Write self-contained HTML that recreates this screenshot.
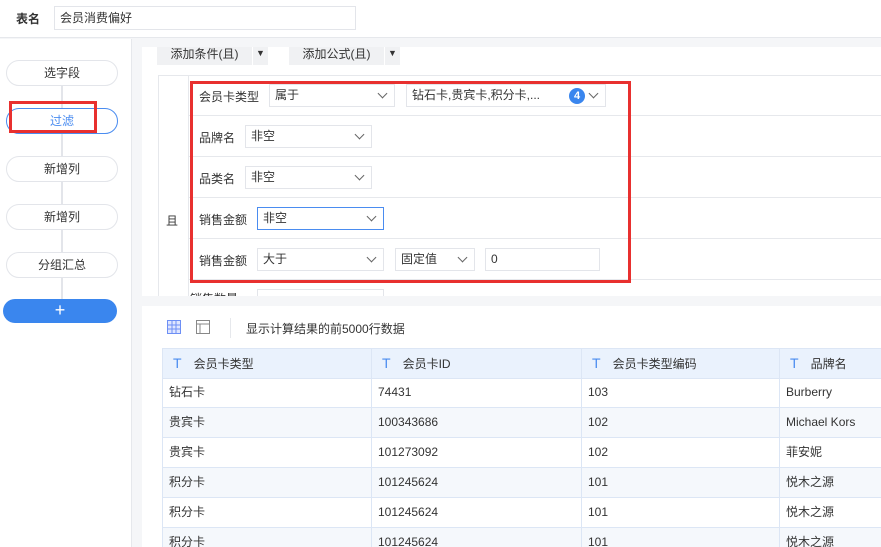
<!DOCTYPE html>
<html><head><meta charset="utf-8"><style>
*{box-sizing:border-box;margin:0;padding:0}
body{width:881px;height:547px;overflow:hidden;background:#f5f6f8;font-family:"Liberation Sans","Noto Sans CJK SC",sans-serif;font-size:12px;color:#333;position:relative}
.a{position:absolute}
.top{left:0;top:0;width:881px;height:38px;background:#fff;border-bottom:1px solid #e6e8ec}
.side{left:0;top:39px;width:132px;height:508px;background:#fff;border-right:1px solid #e6e8ec}
.pill{position:absolute;left:6px;width:112px;height:26px;border:1px solid #e3e5ea;border-radius:13px;background:#fff;text-align:center;line-height:24px;color:#333}
.sel{border:1px solid #e3e5ea;background:#fff;height:23px;line-height:21px;padding-left:5px;position:absolute}
.chev{position:absolute;right:8px;top:5px;width:7px;height:7px;border-right:1px solid #666;border-bottom:1px solid #666;transform:rotate(45deg)}
.row{position:absolute;left:188px;width:693px;height:41px;border-bottom:1px solid #e6e8ec}
.lbl{position:absolute;left:11px;top:13px}
.td{position:absolute;height:30px;line-height:29px;padding-left:6px;border-right:1px solid #dce6f5;border-bottom:1px solid #dce6f5}
.T{color:#4a8cf0;font-size:14px;margin:0 12px 0 4px}
</style></head><body>
<div class="a top">
<div class="a" style="left:16px;top:10px;font-weight:bold">表名</div>
<div class="a" style="left:54px;top:6px;width:302px;height:24px;border:1px solid #e3e5ea;padding-left:5px;line-height:22px">会员消费偏好</div>
</div>
<div class="a side">
<div class="a" style="left:61px;top:30px;width:2px;height:240px;background:#e3e5ea"></div>
<div class="pill" style="top:21px">选字段</div>
<div class="pill" style="top:69px;border-color:#4a8cf0;color:#4a8cf0">过滤</div>
<div class="a" style="left:9px;top:62px;width:88px;height:32px;border:3px solid #e8302f"></div>
<div class="pill" style="top:117px">新增列</div>
<div class="pill" style="top:165px">新增列</div>
<div class="pill" style="top:213px">分组汇总</div>
<div class="a" style="left:3px;top:260px;width:114px;height:24px;border-radius:12px;background:#3a86ee;color:#fff;text-align:center;line-height:22px;font-size:18px">+</div>
</div>
<div class="a" style="left:142px;top:47px;width:739px;height:249px;background:#fff"></div>
<div class="a" style="left:157px;top:47px;width:95px;height:18px;background:#f0f1f3;text-align:center;line-height:14px">添加条件(且)</div>
<div class="a" style="left:253px;top:47px;width:15px;height:18px;background:#f0f1f3;text-align:center;line-height:12px;font-size:9px">▼</div>
<div class="a" style="left:289px;top:47px;width:95px;height:18px;background:#f0f1f3;text-align:center;line-height:14px">添加公式(且)</div>
<div class="a" style="left:385px;top:47px;width:15px;height:18px;background:#f0f1f3;text-align:center;line-height:12px;font-size:9px">▼</div>
<div class="a" style="left:158px;top:75px;width:723px;height:221px;border-left:1px solid #e6e8ec;border-top:1px solid #e6e8ec"></div>
<div class="a" style="left:188px;top:75px;width:1px;height:221px;background:#e6e8ec"></div>
<div class="a" style="left:166px;top:212px">且</div>
<div class="row" style="top:75px"><span class="lbl">会员卡类型</span>
<div class="sel" style="left:81px;top:9px;width:126px">属于<i class="chev"></i></div>
<div class="sel" style="left:218px;top:9px;width:200px">钻石卡,贵宾卡,积分卡,...<span class="a" style="left:162px;top:3px;width:16px;height:16px;border-radius:8px;background:#3a86ee;color:#fff;font-weight:bold;text-align:center;line-height:16px;font-size:11px">4</span><i class="chev"></i></div></div>
<div class="row" style="top:116px"><span class="lbl">品牌名</span><div class="sel" style="left:57px;top:9px;width:127px">非空<i class="chev"></i></div></div>
<div class="row" style="top:157px"><span class="lbl">品类名</span><div class="sel" style="left:57px;top:9px;width:127px">非空<i class="chev"></i></div></div>
<div class="row" style="top:198px"><span class="lbl">销售金额</span><div class="sel" style="left:69px;top:9px;width:127px;border-color:#4a8cf0">非空<i class="chev"></i></div></div>
<div class="row" style="top:239px"><span class="lbl">销售金额</span><div class="sel" style="left:69px;top:9px;width:127px">大于<i class="chev"></i></div>
<div class="sel" style="left:207px;top:9px;width:80px">固定值<i class="chev"></i></div>
<div class="sel" style="left:297px;top:9px;width:115px">0</div></div>
<div class="a" style="left:190px;top:281px;width:50px;height:15px;overflow:hidden;color:#333"><div style="margin-top:9px">销售数量</div></div>
<div class="a" style="left:257px;top:289px;width:127px;height:7px;border:1px solid #e3e5ea;border-bottom:0;overflow:hidden"></div>
<div class="a" style="left:190px;top:81px;width:441px;height:202px;border:3px solid #e8302f"></div>
<div class="a" style="left:142px;top:306px;width:739px;height:241px;background:#fff"></div>
<svg class="a" style="left:167px;top:320px" width="14" height="14"><rect x="0.5" y="0.5" width="13" height="13" fill="#dfe6ff" stroke="#6d8ff5"/><path d="M5 0v14M9 0v14M0 5h14M0 9h14" stroke="#6d8ff5"/></svg>
<svg class="a" style="left:196px;top:320px" width="14" height="14"><rect x="0.5" y="0.5" width="13" height="13" fill="none" stroke="#888"/><path d="M0 4h14M4 4v10" stroke="#888"/></svg>
<div class="a" style="left:230px;top:318px;width:1px;height:20px;background:#e6e8ec"></div>
<div class="a" style="left:246px;top:320px">显示计算结果的前5000行数据</div>
<div class="a" style="left:162px;top:348px;width:719px;height:199px;overflow:hidden;border-top:1px solid #dce6f5;border-left:1px solid #dce6f5">
<div class="td" style="left:0;top:0;width:209px;background:#eaf2fd"><span class="T">T</span>会员卡类型</div>
<div class="td" style="left:209px;top:0;width:210px;background:#eaf2fd"><span class="T">T</span>会员卡ID</div>
<div class="td" style="left:419px;top:0;width:198px;background:#eaf2fd"><span class="T">T</span>会员卡类型编码</div>
<div class="td" style="left:617px;top:0;width:110px;background:#eaf2fd"><span class="T">T</span>品牌名</div>
</div>
<div class="a" style="left:162px;top:378px;width:719px;height:169px;overflow:hidden;border-left:1px solid #dce6f5">
<div style="position:relative;height:30px"><div class="td" style="left:0;width:209px">钻石卡</div><div class="td" style="left:209px;width:210px">74431</div><div class="td" style="left:419px;width:198px">103</div><div class="td" style="left:617px;width:110px">Burberry</div></div>
<div style="position:relative;height:30px;background:#f5f8fc"><div class="td" style="left:0;width:209px">贵宾卡</div><div class="td" style="left:209px;width:210px">100343686</div><div class="td" style="left:419px;width:198px">102</div><div class="td" style="left:617px;width:110px">Michael Kors</div></div>
<div style="position:relative;height:30px"><div class="td" style="left:0;width:209px">贵宾卡</div><div class="td" style="left:209px;width:210px">101273092</div><div class="td" style="left:419px;width:198px">102</div><div class="td" style="left:617px;width:110px">菲安妮</div></div>
<div style="position:relative;height:30px;background:#f5f8fc"><div class="td" style="left:0;width:209px">积分卡</div><div class="td" style="left:209px;width:210px">101245624</div><div class="td" style="left:419px;width:198px">101</div><div class="td" style="left:617px;width:110px">悦木之源</div></div>
<div style="position:relative;height:30px"><div class="td" style="left:0;width:209px">积分卡</div><div class="td" style="left:209px;width:210px">101245624</div><div class="td" style="left:419px;width:198px">101</div><div class="td" style="left:617px;width:110px">悦木之源</div></div>
<div style="position:relative;height:30px;background:#f5f8fc"><div class="td" style="left:0;width:209px">积分卡</div><div class="td" style="left:209px;width:210px">101245624</div><div class="td" style="left:419px;width:198px">101</div><div class="td" style="left:617px;width:110px">悦木之源</div></div>
</div>
</body></html>
